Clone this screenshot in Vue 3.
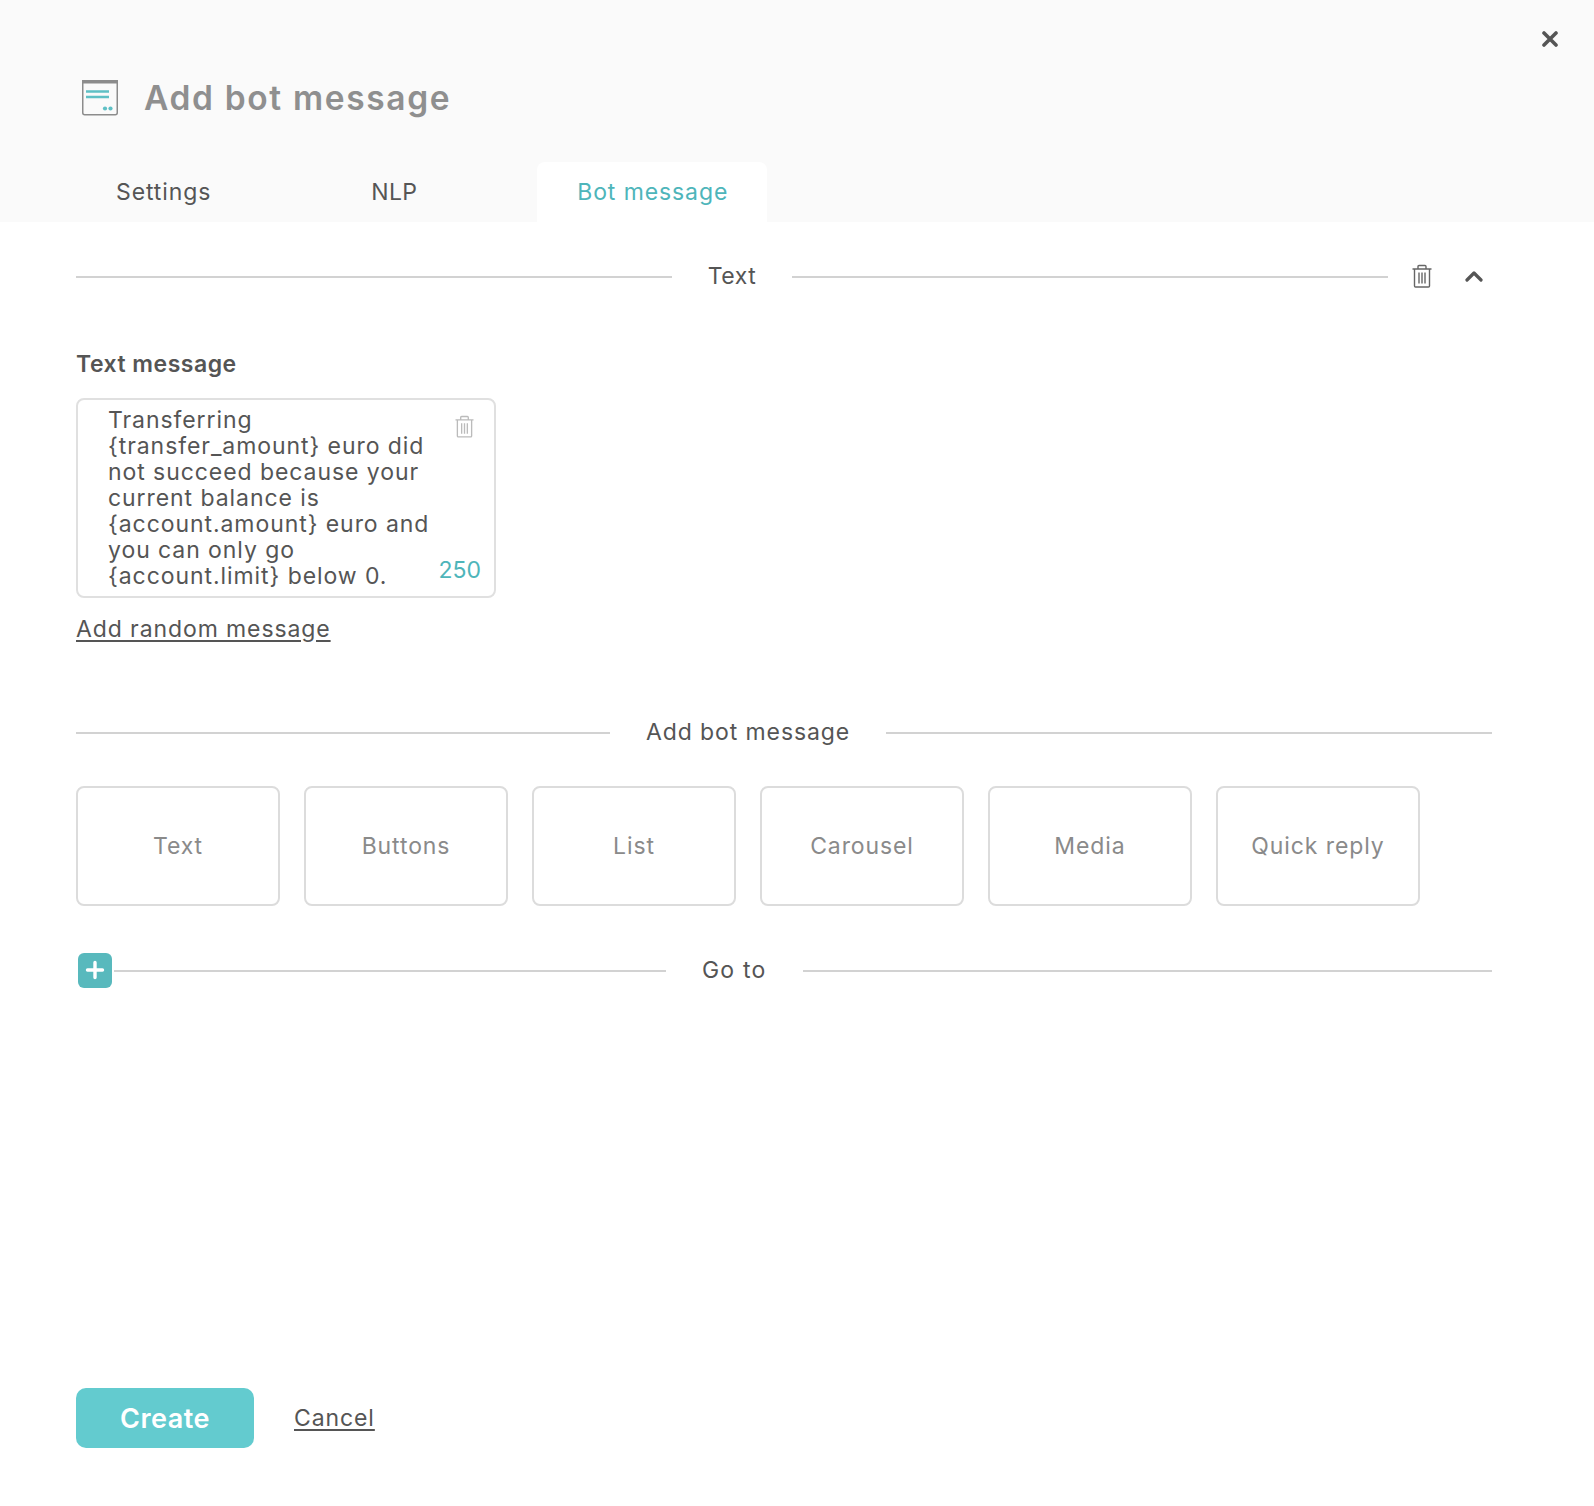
<script setup>
const cards = ['Text', 'Buttons', 'List', 'Carousel', 'Media', 'Quick reply']
const lines = [
  'Transferring',
  '{transfer_amount} euro did',
  'not succeed because your',
  'current balance is',
  '{account.amount} euro and',
  'you can only go',
  '{account.limit} below 0.'
]
</script>

<template>
  <div class="page">
    <header class="head">
      <button class="close" aria-label="Close">
        <svg width="16" height="16" viewBox="0 0 16 16"><path d="M2 2l12 12M14 2L2 14" stroke="#555" stroke-width="3.6" stroke-linecap="round" /></svg>
      </button>
      <div class="title-row">
        <svg class="title-icon" width="38" height="38" viewBox="0 0 38 38" fill="none">
          <rect x="1.75" y="1.75" width="34.5" height="34" rx="2" fill="#fafafa" stroke="#8c8c8c" stroke-width="1.5" />
          <rect x="1" y="1" width="36" height="3.5" fill="#8c8c8c" />
          <path d="M5 12.5h23M5 18h23" stroke="#5fc0c5" stroke-width="2.4" />
          <circle cx="24" cy="29.5" r="2.1" fill="#5fc0c5" />
          <circle cx="29.5" cy="29.5" r="2.1" fill="#5fc0c5" />
        </svg>
        <h1>Add bot message</h1>
      </div>
      <nav class="tabs">
        <span class="tab">Settings</span>
        <span class="tab nlp">NLP</span>
        <span class="tab active">Bot message</span>
      </nav>
    </header>

    <main class="body">
      <div class="section-head">
        <div class="divider short"><i></i><span class="t-text">Text</span><i></i></div>
        <svg class="trash" width="20" height="24" viewBox="0 0 20 24" fill="none" stroke="#666" stroke-width="1.4">
          <path d="M0.5 5h19M6 5V2.5q0-1 1-1h6q1 0 1 1V5M2.5 5v17q0 1 1 1h13q1 0 1-1V5M7 8.5v11M10 8.5v11M13 8.5v11" />
        </svg>
        <svg class="chev" width="18" height="12" viewBox="0 0 18 12" fill="none"><path d="M2 10l7-7 7 7" stroke="#555" stroke-width="3.2" stroke-linecap="round" stroke-linejoin="round" /></svg>
      </div>

      <label class="field-label">Text message</label>
      <div class="msg">
        <div class="msg-text"><div v-for="l in lines" :key="l">{{ l }}</div></div>
        <svg class="msg-trash" width="19" height="23" viewBox="0 0 20 24" fill="none" stroke="#bbb" stroke-width="1.4">
          <path d="M0.5 5h19M6 5V2.5q0-1 1-1h6q1 0 1 1V5M2.5 5v17q0 1 1 1h13q1 0 1-1V5M7 8.5v11M10 8.5v11M13 8.5v11" />
        </svg>
        <span class="count">250</span>
      </div>
      <a class="link random">Add random message</a>

      <div class="divider add"><i class="l1"></i><span>Add bot message</span><i></i></div>

      <div class="cards">
        <button v-for="c in cards" :key="c" class="card">{{ c }}</button>
      </div>

      <div class="goto">
        <span class="plus">
          <svg width="20" height="20" viewBox="0 0 20 20"><path d="M10 2.5v15M2.5 10h15" stroke="#fff" stroke-width="3.4" stroke-linecap="round" /></svg>
        </span>
        <div class="divider go"><i class="l2"></i><span class="t-go">Go to</span><i></i></div>
      </div>

      <div class="actions">
        <button class="create">Create</button>
        <a class="link cancel">Cancel</a>
      </div>
    </main>
  </div>
</template>

<style>
html, body { margin: 0; background: #fff; }
</style>

<style scoped>
.page {
  width: 1594px;
  height: 1506px;
  display: flex;
  flex-direction: column;
  font-family: Inter, "Open Sans", sans-serif;
  color: #555;
  font-size: 23px;
  letter-spacing: 0.9px;
  background: #fff;
}
.head {
  position: relative;
  height: 222px;
  background: #fafafa;
  display: flex;
  flex-direction: column;
  justify-content: space-between;
  flex: none;
}
.close {
  position: absolute;
  top: 31px;
  left: 1542px;
  padding: 0;
  border: 0;
  background: none;
  line-height: 0;
}
.title-row {
  display: flex;
  align-items: center;
  padding: 79px 0 0 81px;
}
.title-icon { margin-right: 25px; }
h1 {
  margin: 0;
  font-size: 33.5px;
  font-weight: 600;
  color: #8f8f8f;
  line-height: 38px;
  letter-spacing: 1.65px;
}
.tabs {
  display: flex;
  gap: 80px;
  padding-left: 76px;
  height: 60px;
}
.tab {
  display: flex;
  align-items: center;
  padding: 0 40px;
  border-radius: 8px 8px 0 0;
  white-space: nowrap;
}
.nlp { letter-spacing: 0.3px; }
.active { width: 230px; box-sizing: border-box; background: #fff; color: #4eb5ba; }
.body {
  flex: 1;
  padding: 0 102px 0 76px;
  display: flex;
  flex-direction: column;
  align-items: flex-start;
}
.section-head {
  margin-top: 41px;
  width: 100%;
  height: 28px;
  display: flex;
  align-items: center;
}
.divider {
  display: flex;
  align-items: center;
  white-space: nowrap;
  flex: 1;
  gap: 36px;
}
.divider i {
  flex: 1;
  height: 2px;
  background: #d2d2d2;
}
.divider span { line-height: 28px; }
.divider.short { flex: 0 0 1312px; }
.divider.short span, .divider.add span { margin-bottom: 2px; }
.t-text { letter-spacing: 0.5px; }
.t-go { letter-spacing: 1.2px; }
.trash { margin-left: 24px; margin-bottom: 2px; }
.chev { margin-left: 33px; margin-bottom: 2px; }
.field-label {
  margin-top: 59px;
  font-weight: 600;
  line-height: 28px;
  height: 28px;
  letter-spacing: 0.5px;
}
.msg {
  position: relative;
  box-sizing: border-box;
  margin-top: 20px;
  width: 420px;
  height: 200px;
  border: 2px solid #e0e0e0;
  border-radius: 8px;
  padding: 7px 0 0 30px;
  line-height: 26px;
  white-space: nowrap;
  letter-spacing: 0.93px;
}
.msg-trash {
  position: absolute;
  top: 15px;
  right: 20px;
}
.count {
  position: absolute;
  right: 13px;
  top: 157px;
  color: #4eb5ba;
  letter-spacing: 0;
}
.link {
  color: #555;
  text-decoration: underline;
  text-underline-offset: 3px;
}
.random {
  margin-top: 17px;
  line-height: 28px;
}
.divider.add {
  margin-top: 75px;
  width: 100%;
  flex: none;
}
.l1 { flex: 0 0 534px !important; }
.cards {
  margin-top: 38px;
  display: flex;
  gap: 24px;
}
.card {
  box-sizing: border-box;
  width: 204px;
  height: 120px;
  border: 2px solid #dcdcdc;
  border-radius: 8px;
  background: #fff;
  color: #8a8a8a;
  font: inherit;
  letter-spacing: inherit;
  padding: 0;
}
.goto {
  margin-top: 46px;
  width: 100%;
  display: flex;
  align-items: center;
  height: 36px;
}
.plus {
  width: 34px;
  height: 35px;
  margin-left: 2px;
  flex: none;
  display: flex;
  align-items: center;
  justify-content: center;
  background: #58b9bd;
  border-radius: 6px;
}
.divider.go { margin-left: 2px; }
.divider.go i { margin-top: 2px; }
.l2 { flex: 0 0 552px !important; }
.actions {
  margin-top: 400px;
  display: flex;
  align-items: center;
  gap: 40px;
}
.create {
  width: 178px;
  height: 60px;
  border: 0;
  border-radius: 10px;
  background: #63cbcf;
  color: #fff;
  font: inherit;
  font-size: 27px;
  font-weight: 600;
  letter-spacing: 0.5px;
  padding: 0;
}
</style>
